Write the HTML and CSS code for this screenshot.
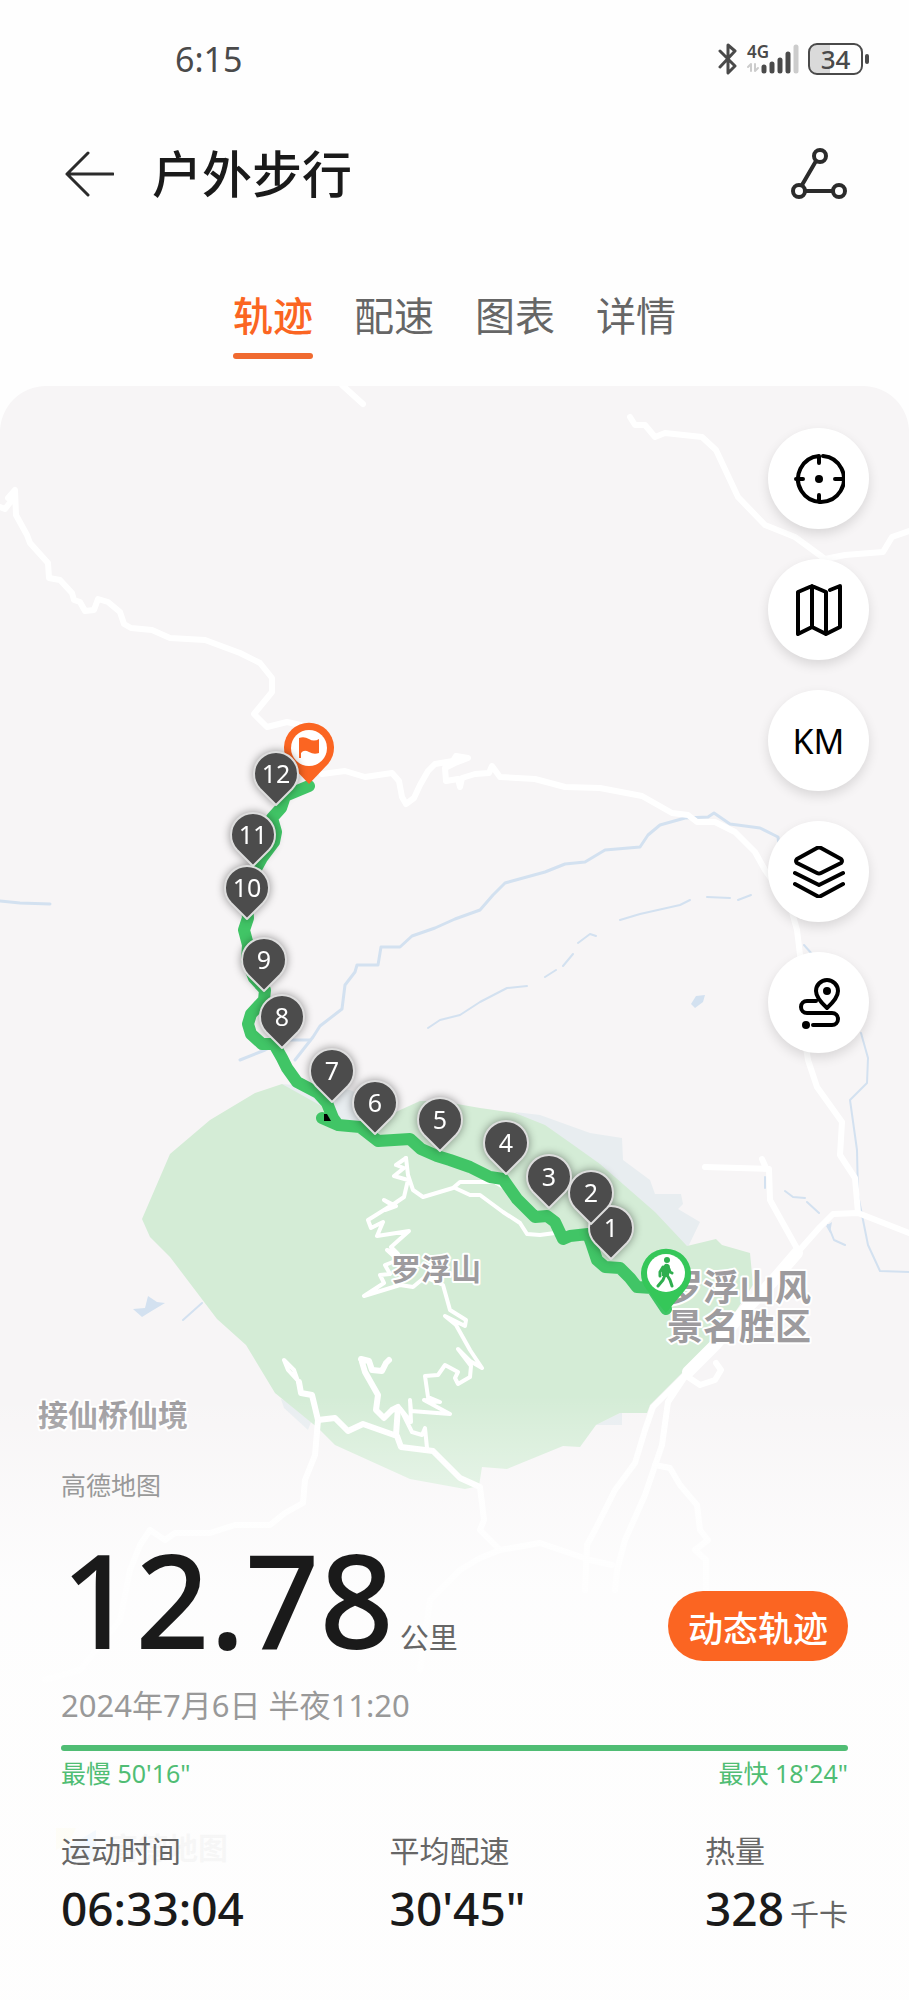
FILE: index.html
```html
<!DOCTYPE html>
<html lang="zh-CN">
<head>
  <meta charset="UTF-8">
  <meta name="viewport" content="width=device-width, initial-scale=1">
  <title>户外步行</title>
  <link rel="stylesheet" href="styles.css">
</head>
<body>

  <!-- STATUS BAR -->
  <div class="status-bar">
    <span class="clock">6:15</span>
    <div class="status-icons">
      <svg class="icon-bt" viewBox="0 0 20 32" width="20" height="32" aria-hidden="true">
        <path d="M2 8l15 15-7 7V2l7 6L2 24"/>
      </svg>
      <svg class="icon-signal" viewBox="0 0 54 32" width="54" height="32" aria-hidden="true">
        <text x="1" y="15">4G</text>
        <path class="dim thin" d="M5 28v-7l-3 3M9 21v7l3-3"/>
        <path class="bars" d="M18 28v-4M26 28v-7M34 28V17M42 28V11"/>
        <path class="bars dim" d="M50 28V4"/>
      </svg>
      <span class="battery">34</span>
    </div>
  </div>

  <!-- HEADER -->
  <header class="header">
    <button class="icon-btn" aria-label="返回">
      <svg viewBox="0 0 52 52" width="52" height="52"><path d="M26 5L5 26l21 21M5 26h46"/></svg>
    </button>
    <h1>户外步行</h1>
    <button class="icon-btn" aria-label="分享">
      <svg class="share" viewBox="0 0 56 52" width="56" height="52">
        <path d="M11 37L25 13M15 43h27"/>
        <circle cx="29" cy="8" r="6"/><circle cx="8" cy="43" r="6"/><circle cx="48" cy="43" r="6"/>
      </svg>
    </button>
  </header>

  <!-- TABS -->
  <nav class="tabs">
    <a class="active" href="#track">轨迹</a>
    <a href="#pace">配速</a>
    <a href="#chart">图表</a>
    <a href="#detail">详情</a>
  </nav>

  <main class="track" id="track">
    <!-- MAP -->
    <svg class="map" viewBox="0 386 909 1614" role="img" aria-label="轨迹地图">
      <defs>
        <path id="pin" d="M0 2L-16 -14A22 22 0 1 1 16 -14Z"/>
      </defs>

      <!-- scenic area -->
      <path class="land" d="M282 1084L350 1090 400 1112 370 1130 330 1120ZM515 1112L540 1115 590 1133 622 1138 623 1160 650 1180 655 1194 681 1194 683 1204 678 1209 700 1222 688 1247 600 1170ZM596 1425L622 1412V1425ZM281 1399L293 1404 311 1422 308 1430 284 1408Z"/>
      <path class="park" d="M142 1219L170 1154 210 1120 255 1093 282 1084 325 1108 340 1125 370 1128 398 1111 420 1101 440 1101 480 1108 515 1113 545 1125 572 1144 600 1164 655 1212 687 1246 716 1239 722 1245 750 1253 753 1285 720 1335 650 1405 647 1413 620 1413 596 1425 580 1447 563 1446 507 1469 482 1467 479 1486 465 1489 410 1479 335 1445 318 1428 275 1393 246 1345 217 1319 170 1257 150 1237Z"/>

      <!-- rivers -->
      <g class="water">
        <path d="M295 1060L313 1037 320 1026 342 1009 345 985 355 972 357 965 378 965 381 947 400 947 412 936 435 928 455 919 480 910 493 895 505 883 545 872 565 864 585 862 605 850 640 847 648 835 660 825 685 818 708 817 714 813 730 824 760 828 778 837 779 845"/>
        <path d="M240 1060L265 1050 285 1040H310M0 901L20 903 50 904"/>
        <path class="stream" d="M428 1028L440 1020 460 1015 480 1002 507 988 527 986M545 977L556 970M563 966L573 954M578 943L590 934 596 936M620 920L640 914 680 905 690 900M707 897L730 898M738 900L751 895"/>
        <path class="stream" d="M804 945L812 954M861 1033L868 1058 867 1083 850 1100 857 1150 858 1195 868 1245 880 1271 909 1272M785 1191L793 1197 805 1198M807 1202L819 1213M765 1177V1188M828 1225L834 1240 845 1245M183 1320L202 1303"/>
        <path class="lake" d="M691 1004L696 996 705 995 703 1002 695 1008ZM133 1309L145 1308 148 1296 157 1302 165 1303 150 1312 142 1317ZM826 1226L832 1222 830 1233Z"/>
      </g>

      <!-- roads -->
      <g class="road">
        <path d="M0 507L5 509 12 500 8 498 15 490 16 515 27 535 30 543 48 563 49 578 60 580 72 593 74 600 80 602 85 611 94 610 98 599 108 602 120 612 124 624 131 628 152 630 170 638 205 640 240 653 260 663 272 678 272 692 254 714 267 727 287 722 305 726"/>
        <path d="M322 774L345 771 365 777 392 773 399 781 402 797 406 804 414 798 420 785 428 771 435 764 453 761 456 756 468 758 455 763 445 768 446 781 458 779 460 787 462 778 475 774 489 773 492 766 500 777 535 779 565 787 600 788 642 796 672 813 688 815 697 822 715 822 735 832 755 852 765 870 790 905 797 930 800 955 803 1030 808 1060 817 1087 842 1122 840 1155 855 1178 858 1213"/>
        <path d="M909 1233L858 1213 833 1214 820 1227 797 1253"/>
        <path class="wide" d="M797 1253L772 1282 745 1310 715 1345 688 1372"/>
        <path d="M688 1372L653 1407 645 1430 635 1463 615 1490 595 1530 587 1545 585 1590M688 1372L668 1402 662 1445 645 1495 625 1540 617 1570 615 1590"/>
        <path d="M705 1167L769 1169 770 1200 799 1252M762 1159L766 1168M688 1377L700 1385 715 1380 721 1370 716 1363"/>
        <path d="M655 1465L670 1468 680 1485 697 1505 700 1530 708 1540 695 1550 706 1560 706 1600"/>
        <path d="M630 417L635 425 645 425 655 437 665 433 702 437 716 450 738 497 765 525 795 537 825 559 845 555 883 552 892 537 909 531M342 385L363 404"/>
        <path d="M299 1382L301 1393 312 1395 318 1420 315 1455 305 1480 303 1503 285 1513 270 1525 235 1525 210 1533 175 1533 165 1540 150 1530 140 1545 130 1570 120 1620 80 1670 45 1680"/>
        <path d="M318 1420L335 1418 348 1431 363 1424 397 1436 401 1447 433 1451 460 1478 480 1487 484 1520 480 1530 500 1550 540 1543 590 1560 612 1565M500 1550L480 1558 460 1570 430 1600 420 1670"/>
        <path d="M362 1362L365 1372 378 1395 376 1410 384 1418 392 1410 398 1407 396 1435M361 1359L369 1361 372 1370 382 1371 386 1363 389 1360"/>
      </g>
      <g class="road thin-road">
        <path d="M406 1158L396 1165 404 1168 394 1176 408 1180 404 1197 385 1210 396 1206 384 1200 392 1205 368 1220 371 1228 383 1222 377 1236 409 1231 391 1247 398 1254 387 1250 398 1260 385 1265 390 1274 380 1275 384 1283 364 1296 400 1285 413 1287 425 1277 443 1285 450 1310 466 1320 465 1326 445 1316 456 1325 470 1350 482 1368 470 1361 458 1349 471 1366 470 1377 458 1384 455 1378 458 1372 445 1365 438 1375 425 1376 428 1397 440 1402 424 1400 450 1414 411 1411 410 1400 411 1422 400 1408 412 1432 422 1435 425 1428 427 1448"/>
        <path d="M406 1158L408 1175 413 1190 423 1197 453 1188 460 1182 495 1182 505 1188M455 1188L470 1195 480 1195 503 1212 520 1223 527 1234 540 1235 555 1233M299 1384L294 1370 284 1360 288 1370 299 1382"/>
      </g>

      <!-- place names -->
      <g class="place">
        <text x="391" y="1280">罗浮山</text>
        <text x="38" y="1426">接仙桥仙境</text>
        <text class="big" x="667" y="1301">罗浮山风</text>
        <text class="big" x="667" y="1340">景名胜区</text>
      </g>
      <g class="watermark">
        <path class="wm-a" d="M56 1828h20l-8 16-12 6z"/>
        <path class="wm-b" d="M96 1830l-30 18v12h30z"/>
        <text x="108" y="1859">高德地图</text>
      </g>

      <!-- walked route -->
      <path class="route" d="M309 786L285 796 281 808 272 818 276 832 274 842 262 858 250 880 247 905 248 918 244 930 248 945 247 960 254 978 265 990 264 1000 251 1014 248 1024 251 1034 262 1044 274 1044 282 1058 287 1068 292 1075 297 1082 318 1093 327 1103 333 1118 338 1125 322 1118M338 1125L360 1127 378 1141 410 1139 421 1149 437 1156 450 1160 470 1167 490 1177 503 1179 517 1199 535 1217 547 1216 555 1222 563 1239 570 1236 588 1234 592 1245 597 1260 605 1267 620 1268 630 1278 637 1287 652 1288 666 1309"/>
      <path class="gap-mark" d="M324 1114h3l4 7h-7z"/>

      <!-- start and finish -->
      <g class="start" transform="translate(666 1273)">
        <path d="M0 40L-19 17A25 25 0 1 1 19 17Z"/>
        <circle r="19"/>
        <circle class="fig" cx="1" cy="-13" r="3"/>
        <path class="fig" d="M-1 -9Q3 -10 4 -6L3 2 1 3H-4V-5Z"/>
        <path class="limb" d="M-3 -6L-6 -1V3M3 -4L4 -1 6 0M-1 2L-3 7 -8 13M1 2L4 7 6 13"/>
      </g>
      <g class="finish" transform="translate(309 748)">
        <path d="M0 36L-19 16A25 25 0 1 1 19 16Z"/>
        <circle r="18"/>
        <path class="flag" d="M-10 -10Q-5 -12 0 -9T10 -9V5Q5 7 0 4T-8 5V10H-10Z"/>
      </g>

      <!-- kilometre pins -->
      <g class="km-pins">
        <g transform="translate(611 1257)"><use href="#pin"/><text y="-20">1</text></g>
        <g transform="translate(591 1222)"><use href="#pin"/><text y="-20">2</text></g>
        <g transform="translate(549 1206)"><use href="#pin"/><text y="-20">3</text></g>
        <g transform="translate(506 1172)"><use href="#pin"/><text y="-20">4</text></g>
        <g transform="translate(440 1149)"><use href="#pin"/><text y="-20">5</text></g>
        <g transform="translate(375 1132)"><use href="#pin"/><text y="-20">6</text></g>
        <g transform="translate(332 1100)"><use href="#pin"/><text y="-20">7</text></g>
        <g transform="translate(282 1046)"><use href="#pin"/><text y="-20">8</text></g>
        <g transform="translate(264 989)"><use href="#pin"/><text y="-20">9</text></g>
        <g transform="translate(253 864)"><use href="#pin"/><text y="-20">11</text></g>
        <g transform="translate(247 917)"><use href="#pin"/><text y="-20">10</text></g>
        <g transform="translate(276 803)"><use href="#pin"/><text y="-20">12</text></g>
      </g>
    </svg>

    <!-- MAP TOOLS -->
    <div class="tools">
      <button aria-label="定位">
        <svg viewBox="0 0 52 52" width="52" height="52">
          <path d="M30 3A23 23 0 1 1 26 3V10M3 26h7M42 26h7M26 49v-7"/>
          <circle class="dot" cx="26" cy="26" r="4"/>
        </svg>
      </button>
      <button aria-label="地图类型">
        <svg viewBox="0 0 52 52" width="52" height="52">
          <path d="M5 8L19 2 33 8V50L19 43 5 50ZM19 2V43M33 50L47 43V2L37 6"/>
        </svg>
      </button>
      <button>KM</button>
      <button aria-label="图层">
        <svg viewBox="0 0 52 52" width="52" height="52">
          <path d="M24 2Q26 1 28 2L48 13Q50 15 48 17L28 27Q26 28 24 27L4 17Q2 15 4 13ZM2 27L26 39 50 27M2 38L26 51 50 38"/>
        </svg>
      </button>
      <button aria-label="路线">
        <svg class="route-icon" viewBox="0 0 52 52" width="52" height="52">
          <path d="M34 31Q23 21 23 14A11 11 0 0 1 45 14Q45 21 34 31ZM23 24H14A6 6 0 0 0 14 36H39A6 6 0 0 1 39 48H20"/>
          <circle class="dot" cx="34" cy="14" r="4"/><circle class="dot" cx="13" cy="48" r="4"/>
        </svg>
      </button>
    </div>

    <!-- SUMMARY -->
    <section class="summary">
      <p class="provider">高德地图</p>
      <div class="distance">
        <p><strong>12.78</strong><span class="unit">公里</span></p>
        <button class="replay">动态轨迹</button>
      </div>
      <p class="date">2024年7月6日 半夜11:20</p>
      <div class="pace-bar"></div>
      <div class="pace-range">
        <span>最慢 50'16"</span>
        <span>最快 18'24"</span>
      </div>
      <dl class="stats">
        <div><dt>运动时间</dt><dd>06:33:04</dd></div>
        <div><dt>平均配速</dt><dd>30'45"</dd></div>
        <div><dt>热量</dt><dd>328<span class="unit">千卡</span></dd></div>
      </dl>
    </section>
  </main>

</body>
</html>
```
FILE: styles.css
```css
/* RESET */
* {
  margin: 0;
  padding: 0;
  box-sizing: border-box;
}
body {
  font-family: "Noto Sans", "Noto Sans CJK SC", sans-serif;
  background: #fefefe;
  color: #1a1a1a;
}
button {
  border: none;
  background: none;
  font-family: inherit;
  color: inherit;
  cursor: pointer;
}
svg {
  display: block;
  fill: none;
  stroke-linecap: round;
  stroke-linejoin: round;
}
/* ----- STATUS BAR ----- */
.status-bar {
  display: flex;
  justify-content: space-between;
  align-items: center;
  height: 80px;
  padding: 38px 40px 0 175px;
  color: #4a4a4a;
}
.clock {
  font-size: 34px;
  line-height: 40px;
}
.status-icons {
  display: flex;
  align-items: center;
  gap: 8px;
}
.icon-bt {
  stroke: #4a4a4a;
  stroke-width: 3;
}
.icon-signal {
  overflow: visible;
  stroke: #4a4a4a;
}
.icon-signal text {
  fill: #4a4a4a;
  stroke: none;
  font-size: 17px;
  font-weight: 600;
}
.icon-signal .bars {
  stroke-width: 5;
}
.icon-signal .dim {
  stroke: #cccccc;
}
.icon-signal .thin {
  stroke-width: 2;
}
.battery {
  position: relative;
  width: 55px;
  height: 32px;
  border: 2px solid #4a4a4a;
  border-radius: 9px;
  margin-right: 6px;
  background: linear-gradient(90deg, #dadada 40%, #fefefe 40%);
  font-size: 26px;
  font-weight: 500;
  line-height: 28px;
  text-align: center;
}
.battery::after {
  content: "";
  position: absolute;
  top: 9px;
  right: -8px;
  width: 4px;
  height: 10px;
  border-radius: 2px;
  background: #4a4a4a;
}
/* ----- HEADER ----- */
.header {
  display: flex;
  align-items: center;
  height: 134px;
  padding: 54px 62px 0 62px;
}
.header h1 {
  flex: 1;
  margin-left: 38px;
  font-size: 50px;
  font-weight: 500;
  line-height: 70px;
}
.icon-btn svg {
  stroke: #2b2b2b;
  stroke-width: 3;
}
.icon-btn .share {
  stroke-width: 4;
}
/* ----- TABS ----- */
.tabs {
  display: flex;
  justify-content: center;
  gap: 41px;
  margin: 72px 0 27px;
}
.tabs a {
  padding-bottom: 7px;
  border-bottom: 6px solid transparent;
  color: #666666;
  font-size: 40px;
  line-height: 60px;
  text-decoration: none;
}
.tabs .active {
  position: relative;
  color: #fb6522;
  font-weight: 500;
}
.tabs .active::after {
  content: "";
  position: absolute;
  left: 0;
  right: 0;
  bottom: -6px;
  height: 6px;
  border-radius: 3px;
  background: #f06a30;
}
/* ----- MAP ----- */
.track {
  display: grid;
  grid-template-columns: minmax(0, 1fr);
  border-radius: 46px 46px 0 0;
  overflow: hidden;
  background: #f7f5f6;
}
.track > * {
  grid-area: 1 / 1;
}
.map {
  width: 100%;
  height: auto;
}
.park {
  fill: #d4ecd6;
}
.land {
  fill: #e8edf0;
}
.water {
  stroke: #d3e1f0;
  stroke-width: 3;
}
.stream {
  stroke-width: 2;
}
.lake {
  fill: #d3e1f0;
  stroke: none;
}
.road {
  stroke: #ffffff;
  stroke-width: 6;
}
.wide {
  stroke-width: 12;
}
.thin-road {
  stroke-width: 4;
}
.place {
  fill: #9d9b9e;
  stroke: #ffffff;
  stroke-width: 4;
  paint-order: stroke;
  font-size: 30px;
  font-weight: 700;
}
.place .big {
  font-size: 36px;
}
.watermark {
  fill: #666666;
  font-size: 30px;
  font-weight: 700;
}
.wm-a {
  fill: #f5e36a;
}
.wm-b {
  fill: #2f8cf0;
}
.route {
  stroke: #41c566;
  stroke-width: 12;
}
.gap-mark {
  fill: #000000;
}
.start path,
.start .fig {
  fill: #35c759;
}
.finish path {
  fill: #fb6522;
}
.start circle,
.finish circle {
  fill: #ffffff;
}
.start .fig {
  fill: #2fae4f;
}
.start .limb {
  fill: none;
  stroke: #2fae4f;
  stroke-width: 3;
}
.km-pins {
  filter: drop-shadow(0 0 4px rgba(0, 0, 0, 0.4));
}
.km-pins use {
  fill: #4c4c4c;
  stroke: #dddddd;
  stroke-width: 2;
}
.km-pins text {
  fill: #ffffff;
  font-size: 25px;
  text-anchor: middle;
}
/* ----- MAP TOOLS ----- */
.tools {
  display: flex;
  flex-direction: column;
  gap: 30px;
  align-self: start;
  justify-self: end;
  padding: 42px 40px 0 0;
}
.tools button {
  display: flex;
  align-items: center;
  justify-content: center;
  width: 101px;
  height: 101px;
  border-radius: 50%;
  background: #ffffff;
  box-shadow: 0 5px 12px rgba(0, 0, 0, 0.12);
  color: #000000;
  font-size: 34px;
}
.tools svg {
  stroke: #000000;
  stroke-width: 4;
}
.tools .dot {
  fill: #000000;
  stroke: none;
}
/* ----- SUMMARY ----- */
.summary {
  align-self: end;
  padding: 70px 61px 50px;
  background: linear-gradient(rgba(254, 254, 254, 0), rgba(254, 254, 254, 0.85) 190px, rgba(254, 254, 254, 0.95) 300px);
}
.provider {
  color: #999999;
  font-size: 25px;
  line-height: 40px;
}
.distance {
  display: flex;
  justify-content: space-between;
  align-items: flex-end;
  margin-top: 14px;
  padding-bottom: 4px;
}
.distance strong {
  font-size: 130px;
  font-weight: 500;
  line-height: 160px;
}
.unit {
  margin-left: 6px;
  color: #666666;
  font-size: 29px;
  font-weight: 400;
}
.replay {
  height: 70px;
  margin-bottom: 18px;
  padding: 0 20px;
  border-radius: 35px;
  background: #fb6522;
  color: #ffffff;
  font-size: 35px;
  font-weight: 500;
}
.date {
  color: #999999;
  font-size: 31px;
  line-height: 44px;
}
.pace-bar {
  height: 6px;
  margin-top: 18px;
  border-radius: 3px;
  background: #50bd74;
}
.pace-range {
  display: flex;
  justify-content: space-between;
  margin-top: 4px;
  color: #50bd74;
  font-size: 25px;
  line-height: 36px;
}
.stats {
  display: grid;
  grid-template-columns: 25fr 24fr auto;
  margin-top: 38px;
}
.stats dt {
  color: #666666;
  font-size: 30px;
  line-height: 44px;
}
.stats dd {
  font-size: 46px;
  font-weight: 500;
  line-height: 70px;
  white-space: nowrap;
}
```
